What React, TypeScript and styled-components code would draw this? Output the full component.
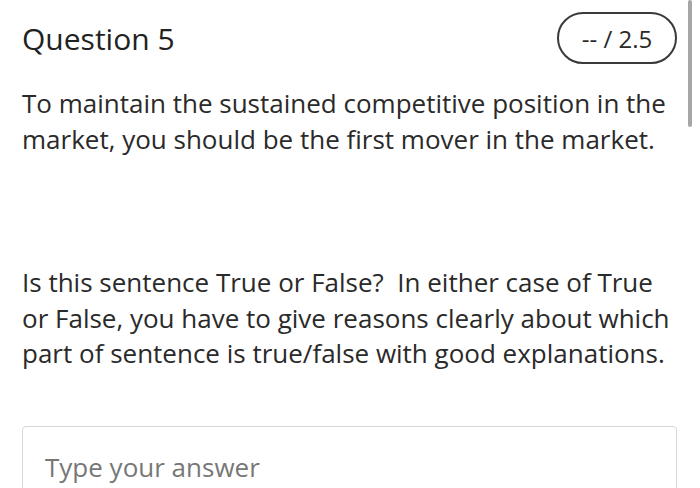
import styled, { createGlobalStyle } from 'styled-components';

const GlobalStyle = createGlobalStyle`
  html, body {
    margin: 0;
    padding: 0;
    background: #ffffff;
  }
  body {
    font-family: 'Open Sans', 'Liberation Sans', sans-serif;
    color: #2a2a2a;
  }
`;

const Page = styled.div`
  position: relative;
  width: 700px;
  height: 488px;
  overflow: hidden;
  padding: 12px 23px 0 22px;
  box-sizing: border-box;
`;

const Header = styled.div`
  display: flex;
  justify-content: space-between;
  align-items: center;
  height: 52px;
`;

const Title = styled.h2`
  margin: 0;
  font-size: 30px;
  font-weight: 400;
  color: #222222;
`;

const PointsPill = styled.div`
  display: flex;
  align-items: center;
  justify-content: center;
  width: 120px;
  height: 52px;
  box-sizing: border-box;
  border: 2px solid #3a3a3a;
  border-radius: 26px;
  font-size: 24px;
  color: #2a2a2a;
`;

const Paragraph = styled.p<{ $top: number }>`
  margin: ${(p) => p.$top}px 0 0;
  font-size: 26px;
  line-height: 35.5px;
  color: #2a2a2a;
`;

const AnswerBox = styled.div`
  margin-top: 54px;
  height: 80px;
  border: 1.5px solid #d6d6d6;
  border-radius: 4px;
  padding: 22px 22px 0;
  box-sizing: border-box;
  font-size: 26px;
  color: #777777;
`;

const Scrollbar = styled.div`
  position: absolute;
  top: 0;
  right: 8px;
  width: 4px;
  height: 127px;
  border-radius: 2px;
  background: #a6a6a6;
`;

export default function App() {
  return (
    <>
      <GlobalStyle />
      <Page>
        <Header>
          <Title>Question 5</Title>
          <PointsPill>-- / 2.5</PointsPill>
        </Header>
        <Paragraph $top={22}>
          To maintain the sustained competitive position in the
          <br />
          market, you should be the first mover in the market.
        </Paragraph>
        <Paragraph $top={108}>
          Is this sentence True or False?&nbsp; In either case of True
          <br />
          or False, you have to give reasons clearly about which
          <br />
          part of sentence is true/false with good explanations.
        </Paragraph>
        <AnswerBox>Type your answer</AnswerBox>
        <Scrollbar />
      </Page>
    </>
  );
}
